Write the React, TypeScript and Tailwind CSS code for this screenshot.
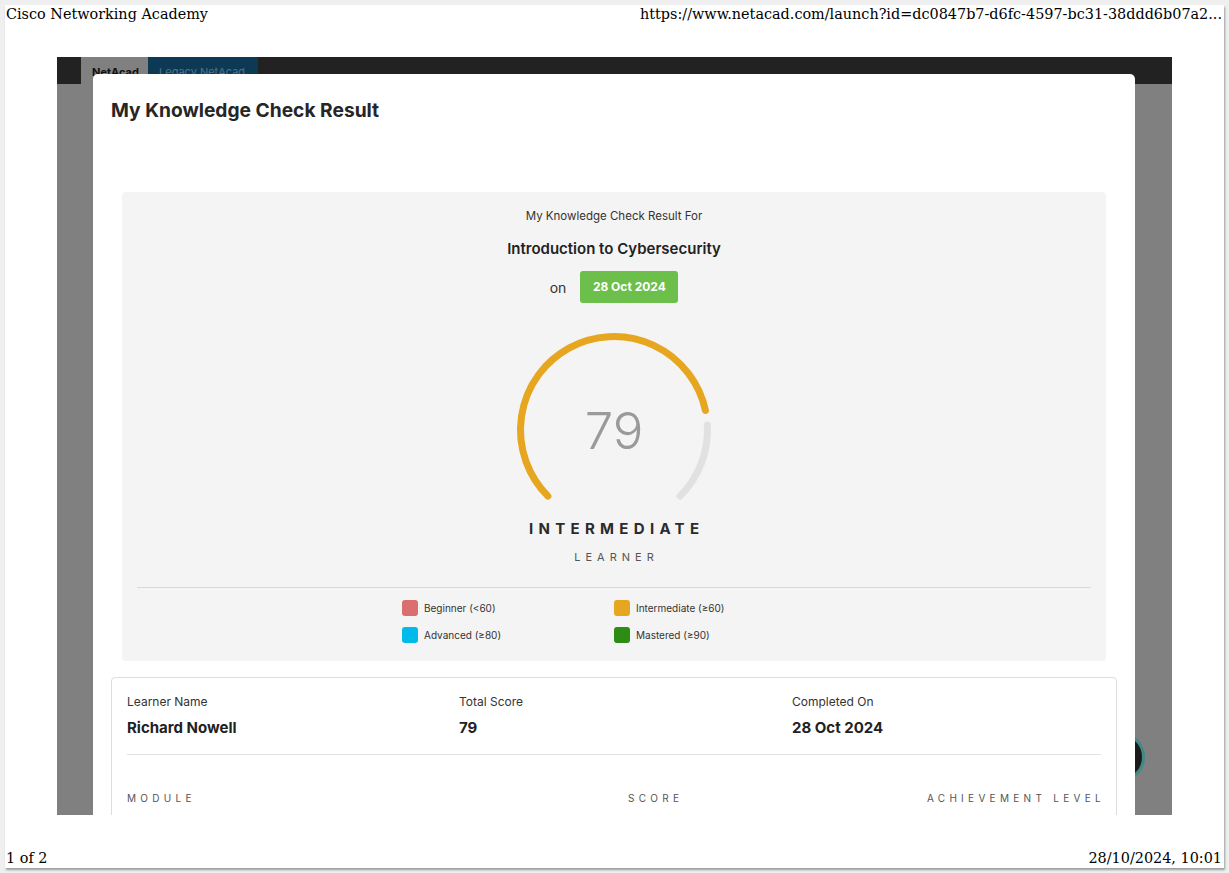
import React from "react";

const legend = [
  { color: "bg-[#d9706f]", label: "Beginner (<60)" },
  { color: "bg-[#e6a620]", label: "Intermediate (≥60)" },
  { color: "bg-[#00bbea]", label: "Advanced (≥80)" },
  { color: "bg-[#2e8b14]", label: "Mastered (≥90)" },
];

function Gauge() {
  return (
    <svg width="200" height="175" viewBox="0 0 200 175" className="relative">
      <path
        d="M 33.89 166.11 A 93.5 93.5 0 1 1 191.46 80.56"
        fill="none"
        stroke="#e6a620"
        strokeWidth="7"
        strokeLinecap="round"
      />
      <path
        d="M 193.37 95.11 A 93.5 93.5 0 0 1 166.11 166.11"
        fill="none"
        stroke="#e1e1e1"
        strokeWidth="7"
        strokeLinecap="round"
      />
      <text
        x="100"
        y="119"
        textAnchor="middle"
        fontSize="51"
        fontWeight="300"
        fill="#9a9a9a"
        fontFamily="Inter, sans-serif"
      >
        79
      </text>
    </svg>
  );
}

export default function App() {
  return (
    <div className="w-[1229px] h-[873px] bg-[#efefef] pl-[5px] pt-[5px] font-['Inter',sans-serif]">
      <div className="w-[1219px] h-[863px] bg-white shadow-[1px_2px_2px_rgba(0,0,0,0.35)] flex flex-col">
        {/* print header */}
        <div className="h-[52px] flex justify-between items-start px-[1px] font-['DejaVu_Serif',serif] text-[14.4px] leading-[18px] text-black">
          <span>Cisco Networking Academy</span>
          <span className="pr-[1px]">https://www.netacad.com/launch?id=dc0847b7-d6fc-4597-bc31-38ddd6b07a2...</span>
        </div>

        {/* screenshot area */}
        <div className="ml-[52px] w-[1115px] h-[758px] relative overflow-hidden bg-[#808080]">
          <div className="h-[27px] bg-[#222222] flex">
            <div className="ml-[24px] w-[67px] bg-[#808080] pl-[11px] pt-[8px] text-[11px] font-bold text-[#111] leading-[14px]">
              NetAcad
            </div>
            <div className="w-[110px] bg-[#0c3a54] pl-[11px] pt-[8px] text-[11px] text-[#51718a] leading-[14px]">
              Legacy NetAcad
            </div>
          </div>

          {/* chat button peeking */}
          <div className="absolute left-[1038px] top-[675px] w-[50px] h-[50px] rounded-full bg-[#1b1b1b] border-[3px] border-[#3f8a87]" />

          {/* modal */}
          <div className="absolute left-[36px] top-[17px] w-[1042px] h-[800px] bg-white rounded-t-[5px] px-[18px] pt-[24px]">
            <h1 className="text-[19.2px] leading-[24px] font-bold text-[#262626]">My Knowledge Check Result</h1>

            <div className="mt-[70px] mx-[11px] bg-[#f4f4f4] rounded-[4px] pt-[16px] pb-[18px] px-[15px] flex flex-col items-center">
              <div className="text-[11.5px] leading-[16px] text-[#333]">My Knowledge Check Result For</div>
              <div className="mt-[15px] text-[15px] leading-[20px] font-semibold text-[#222]">Introduction to Cybersecurity</div>
              <div className="mt-[12px] flex items-center gap-[14px]">
                <span className="text-[14px] text-[#333]">on</span>
                <span className="h-[32px] w-[98px] rounded-[3px] bg-[#6bbf4a] text-white text-[12px] font-bold flex items-center justify-center">
                  28 Oct 2024
                </span>
              </div>
              <div className="mt-[27px]">
                <Gauge />
              </div>
              <div className="mt-[14px] text-[15px] leading-[20px] font-bold text-[#2b2b2b] tracking-[5.3px] pl-[5.3px]">
                INTERMEDIATE
              </div>
              <div className="mt-[10px] text-[11px] leading-[16px] text-[#555] tracking-[5px] pl-[5px]">LEARNER</div>
              <div className="mt-[22px] w-full h-px bg-[#d8d8d8]" />
              <div className="mt-[12px] w-[424px] grid grid-cols-2 gap-y-[11px]">
                {legend.map((l) => (
                  <div key={l.label} className="flex items-center gap-[6px] h-[16px]">
                    <span className={`w-[16px] h-[16px] rounded-[3px] ${l.color}`} />
                    <span className="text-[10px] text-[#333]">{l.label}</span>
                  </div>
                ))}
              </div>
            </div>

            <div className="mt-[16px] border border-[#dddddd] rounded-[4px] px-[15px] pt-[16px]">
              <div className="flex">
                <div className="w-[332px]">
                  <div className="text-[12px] leading-[16px] text-[#333]">Learner Name</div>
                  <div className="mt-[8px] text-[15px] leading-[20px] font-bold text-[#222]">Richard Nowell</div>
                </div>
                <div className="w-[333px]">
                  <div className="text-[12px] leading-[16px] text-[#333]">Total Score</div>
                  <div className="mt-[8px] text-[15px] leading-[20px] font-bold text-[#222]">79</div>
                </div>
                <div className="flex-1">
                  <div className="text-[12px] leading-[16px] text-[#333]">Completed On</div>
                  <div className="mt-[8px] text-[15px] leading-[20px] font-bold text-[#222]">28 Oct 2024</div>
                </div>
              </div>
              <div className="mt-[16px] h-px bg-[#e2e2e2]" />
              <div className="mt-[36px] flex text-[10px] leading-[14px] text-[#555] tracking-[4.3px] h-[40px]">
                <div className="w-[501px]">MODULE</div>
                <div className="flex-1">SCORE</div>
                <div className="-mr-[4px]">ACHIEVEMENT LEVEL</div>
              </div>
            </div>
          </div>
        </div>

        {/* print footer */}
        <div className="flex-1 flex justify-between items-end px-[1px] pb-[1px] font-['DejaVu_Serif',serif] text-[14.4px] leading-[18px] text-black">
          <span>1 of 2</span>
          <span className="pr-[1px]">28/10/2024, 10:01</span>
        </div>
      </div>
    </div>
  );
}
